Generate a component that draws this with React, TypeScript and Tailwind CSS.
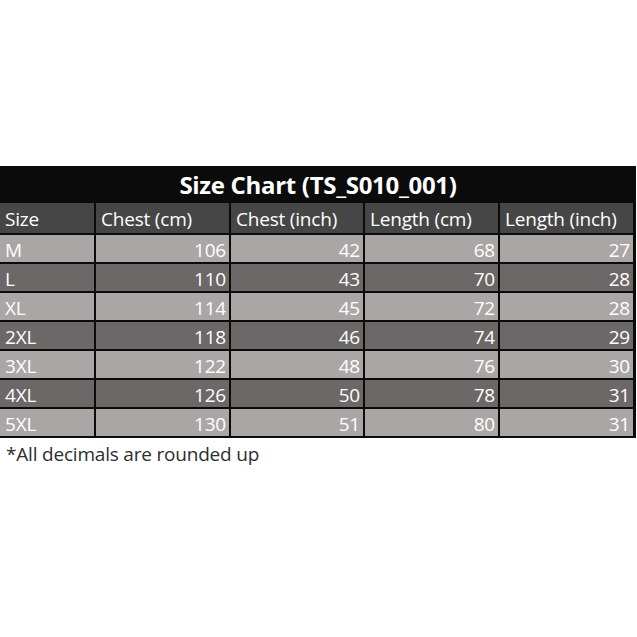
import React from "react";

const rows = [
  ["M", "106", "42", "68", "27"],
  ["L", "110", "43", "70", "28"],
  ["XL", "114", "45", "72", "28"],
  ["2XL", "118", "46", "74", "29"],
  ["3XL", "122", "48", "76", "30"],
  ["4XL", "126", "50", "78", "31"],
  ["5XL", "130", "51", "80", "31"],
];

const headers = ["Size", "Chest (cm)", "Chest (inch)", "Length (cm)", "Length (inch)"];

export default function App() {
  return (
    <div
      className="w-[637px] h-[637px] bg-white overflow-hidden"
      style={{ fontFamily: '"Open Sans", "Noto Sans", sans-serif' }}
    >
      <div className="pt-[166px] w-[636px]">
        <div className="bg-[#0b0b0b] pr-[3px] pb-[2px]">
          <div className="h-[37px] flex items-center justify-center text-white font-bold text-[24px] tracking-[-0.3px] pl-[3px] pt-[1px]">
            Size Chart (TS_S010_001)
          </div>
          <div className="grid grid-cols-[94px_133px_132px_133px_133px] gap-[2px]">
            {headers.map((h) => (
              <div
                key={h}
                className="h-[30px] bg-[#464646] text-white text-[19px] leading-[32px] pl-[5px] tracking-[-0.2px] whitespace-nowrap overflow-hidden"
              >
                {h}
              </div>
            ))}
            {rows.map((r, i) =>
              r.map((c, j) => (
                <div
                  key={`${i}-${j}`}
                  className={`h-[27px] text-white text-[19px] leading-[30px] tracking-[-0.2px] overflow-hidden ${
                    i % 2 === 0 ? "bg-[#a9a6a5]" : "bg-[#6b6867]"
                  } ${j === 0 ? "pl-[5px] text-left" : "pr-[3px] text-right"}`}
                >
                  {c}
                </div>
              ))
            )}
          </div>
        </div>
        <div className="pl-[6px] pt-[2px] text-[19px] text-[#2e2e2e] tracking-[-0.2px]">
          *All decimals are rounded up
        </div>
      </div>
    </div>
  );
}
